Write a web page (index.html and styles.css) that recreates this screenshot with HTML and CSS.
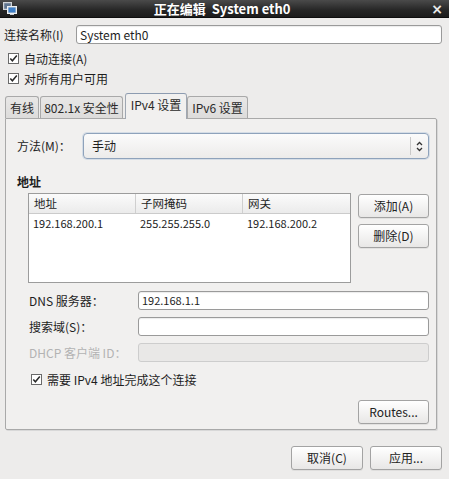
FILE: index.html
```html
<!DOCTYPE html>
<html lang="zh-CN">
<head>
<meta charset="utf-8">
<title>正在编辑 System eth0</title>
<link rel="stylesheet" href="styles.css">
</head>
<body>
<div class="window">
  <div class="titlebar">
    <svg class="app-icon" width="14" height="13" viewBox="0 0 14 13">
      <rect x="0.5" y="0.5" width="8" height="7" fill="#9aa3ad" stroke="#d0d4d8"/>
      <rect x="1.5" y="1.5" width="6" height="5" fill="#5f7590"/>
      <rect x="4.5" y="4.5" width="9" height="7" fill="#c9ced4" stroke="#eef0f2"/>
      <rect x="5.5" y="5.5" width="7" height="5" fill="#3d7fc8"/>
      <rect x="7" y="12" width="4" height="1" fill="#c9ced4"/>
    </svg>
    <div class="title">正在编辑&nbsp; System eth0</div>
    <div class="close">×</div>
  </div>

  <div class="main">
    <div class="name-row">
      <span class="name-label">连接名称(I)</span>
      <div class="entry">System eth0</div>
    </div>

    <div class="check-row top-check">
      <svg class="cb" width="11" height="11" viewBox="0 0 11 11"><rect x="0.5" y="0.5" width="10" height="10" fill="#fff" stroke="#6a6a6a"/><path d="M2.3 5.4 L4.4 7.8 L8.8 2.6" fill="none" stroke="#2a2a2a" stroke-width="1.5"/></svg>
      <span>自动连接(A)</span>
    </div>
    <div class="check-row">
      <svg class="cb" width="11" height="11" viewBox="0 0 11 11"><rect x="0.5" y="0.5" width="10" height="10" fill="#fff" stroke="#6a6a6a"/><path d="M2.3 5.4 L4.4 7.8 L8.8 2.6" fill="none" stroke="#2a2a2a" stroke-width="1.5"/></svg>
      <span>对所有用户可用</span>
    </div>

    <div class="tabs">
      <div class="tab t1">有线</div>
      <div class="tab t2">802.1x 安全性</div>
      <div class="tab t3 active">IPv4 设置</div>
      <div class="tab t4">IPv6 设置</div>
    </div>

    <div class="panel">
      <div class="method-row">
        <span class="method-label">方法(M)：</span>
        <div class="combo">
          <span class="combo-text">手动</span>
          <span class="combo-sep"></span>
          <svg class="combo-arrows" width="7" height="11" viewBox="0 0 7 11">
            <path d="M1 4 L3.5 1.5 L6 4" fill="none" stroke="#333" stroke-width="1.3"/>
            <path d="M1 7 L3.5 9.5 L6 7" fill="none" stroke="#333" stroke-width="1.3"/>
          </svg>
        </div>
      </div>

      <div class="section-title">地址</div>

      <div class="address-area">
        <div class="table">
          <div class="thead">
            <div class="th">地址</div>
            <div class="th">子网掩码</div>
            <div class="th">网关</div>
          </div>
          <div class="trow">
            <div class="td">192.168.200.1</div>
            <div class="td">255.255.255.0</div>
            <div class="td">192.168.200.2</div>
          </div>
        </div>
        <div class="side-buttons">
          <div class="btn">添加(A)</div>
          <div class="btn">删除(D)</div>
        </div>
      </div>

      <div class="form">
        <div class="form-row">
          <span class="form-label">DNS 服务器：</span>
          <div class="entry small-entry"><span class="num">192.168.1.1</span></div>
        </div>
        <div class="form-row">
          <span class="form-label">搜索域(S)：</span>
          <div class="entry small-entry"></div>
        </div>
        <div class="form-row disabled">
          <span class="form-label">DHCP 客户端 ID：</span>
          <div class="entry small-entry"></div>
        </div>
      </div>

      <div class="check-row require">
        <svg class="cb" width="11" height="11" viewBox="0 0 11 11"><rect x="0.5" y="0.5" width="10" height="10" fill="#fff" stroke="#6a6a6a"/><path d="M2.3 5.4 L4.4 7.8 L8.8 2.6" fill="none" stroke="#2a2a2a" stroke-width="1.5"/></svg>
        <span>需要 IPv4 地址完成这个连接</span>
      </div>

      <div class="routes-row">
        <div class="btn">Routes...</div>
      </div>
    </div>

    <div class="dialog-buttons">
      <div class="btn">取消(C)</div>
      <div class="btn">应用...</div>
    </div>
  </div>
</div>
</body>
</html>
```

FILE: styles.css
```css
html, body {
  margin: 0;
  padding: 0;
}
body {
  width: 449px;
  height: 479px;
  overflow: hidden;
  background: #edeceb;
  font-family: "Noto Sans CJK SC", "DejaVu Sans", sans-serif;
  font-size: 12px;
  color: #1e1e1e;
}
.window {
  width: 449px;
  height: 479px;
}
.titlebar {
  height: 18px;
  display: flex;
  align-items: center;
  background: linear-gradient(#4a4a4a, #262626 60%, #1c1c1c);
  border-bottom: 1px solid #0e0e0e;
  box-sizing: border-box;
  padding: 0 6px 0 3px;
}
.app-icon {
  flex: none;
}
.title {
  flex: 1;
  text-align: center;
  color: #ffffff;
  font-weight: bold;
  font-size: 13px;
  line-height: 18px;
  padding-right: 4px;
}
.close {
  color: #e8e8e8;
  font-weight: bold;
  font-size: 14px;
  line-height: 18px;
  font-family: "DejaVu Sans", sans-serif;
}
.main {
  padding: 7px 7px 0 4px;
}
.name-row {
  display: flex;
  height: 19px;
  align-items: center;
}
.name-label {
  width: 72px;
  line-height: 19px;
}
.entry {
  flex: 1;
  height: 19px;
  box-sizing: border-box;
  border: 1px solid #9a9a9a;
  border-radius: 3px;
  background: #ffffff;
  padding-left: 3px;
  line-height: 17px;
  font-size: 12px;
  box-shadow: inset 0 1px 1px rgba(0,0,0,0.08);
}
.check-row {
  display: flex;
  align-items: center;
  height: 20px;
  padding-left: 4px;
}
.top-check {
  margin-top: 4px;
}
.cb {
  flex: none;
  margin-right: 5px;
}
.tabs {
  display: flex;
  align-items: flex-end;
  height: 27px;
  margin-top: 3px;
  padding-left: 1px;
}
.tab {
  height: 22px;
  box-sizing: border-box;
  padding: 0;
  display: flex;
  justify-content: center;
  line-height: 21px;
  border: 1px solid #a9a9a9;
  border-bottom: none;
  border-radius: 3px 3px 0 0;
  background: linear-gradient(#e8e7e6, #dddcdb);
  color: #2a2a2a;
  white-space: nowrap;
}
.t1 { width: 34px; }
.t2 { width: 83px; margin-left: 1px; }
.t3 { width: 62px; margin-left: 2px; }
.t4 { width: 61px; }
.tab.active {
  height: 26px;
  line-height: 22px;
  margin-bottom: -1px;
  position: relative;
  z-index: 1;
  background: #f1f0ef;
  border-color: #9fa7b2;
  border-top-color: #8c9bb0;
}
.panel {
  margin: 0 5px 0 1px;
  border: 1px solid #a9a9a9;
  border-radius: 0 2px 2px 2px;
  background: #f1f0ef;
  padding: 14px 7px 12px 11px;
  height: 312px;
  box-sizing: border-box;
  box-shadow: 1px 1px 0 #d8d8d8;
}
.method-row {
  display: flex;
  align-items: center;
  height: 26px;
}
.method-label {
  width: 66px;
  line-height: 26px;
}
.combo {
  flex: 1;
  height: 26px;
  box-sizing: border-box;
  border: 1px solid #8ea2bb;
  border-radius: 4px;
  background: linear-gradient(#fbfbfb, #ecebea);
  display: flex;
  align-items: center;
  padding-left: 8px;
  padding-right: 5px;
  box-shadow: 0 0 0 1px rgba(160,185,215,0.35);
}
.combo-text {
  flex: 1;
  line-height: 24px;
}
.combo-sep {
  width: 1px;
  height: 18px;
  background: #c9c9c9;
  margin-right: 5px;
}
.combo-arrows {
  flex: none;
}
.section-title {
  font-weight: bold;
  margin-top: 16px;
  line-height: 14px;
  height: 14px;
}
.address-area {
  display: flex;
  margin-top: 4px;
  padding-left: 11px;
  gap: 7px;
}
.table {
  width: 323px;
  height: 90px;
  box-sizing: border-box;
  border: 1px solid #9c9c9c;
  background: #ffffff;
}
.thead {
  display: flex;
  height: 19px;
  background: linear-gradient(#fbfbfb, #ebebeb);
  border-bottom: 1px solid #cbcbcb;
}
.th {
  width: 107px;
  padding-left: 5px;
  box-sizing: border-box;
  line-height: 19px;
  font-size: 11.5px;
  border-right: 1px solid #cfcfcf;
}
.th:last-child {
  border-right: none;
  flex: 1;
}
.trow {
  display: flex;
  height: 18px;
}
.td {
  width: 107px;
  padding-left: 4px;
  box-sizing: border-box;
  line-height: 18px;
  font-size: 11px;
  color: #222;
}
.side-buttons {
  display: flex;
  flex-direction: column;
  gap: 6px;
  padding-top: 1px;
}
.btn {
  height: 24px;
  box-sizing: border-box;
  width: 71px;
  border: 1px solid #a3a3a3;
  border-radius: 3px;
  background: linear-gradient(#ffffff, #e8e7e6);
  text-align: center;
  line-height: 22px;
  color: #222;
  box-shadow: 0 1px 0 rgba(0,0,0,0.06);
}
.form {
  display: flex;
  flex-direction: column;
  gap: 7px;
  margin-top: 8px;
  padding-left: 12px;
}
.form-row {
  display: flex;
  align-items: center;
  height: 19px;
}
.form-label {
  width: 109px;
  line-height: 19px;
}
.small-entry {
  font-size: 11px;
}
.num {
  font-size: 11px;
}
.form-row.disabled .form-label {
  color: #b3b3b3;
}
.form-row.disabled .entry {
  background: #e9e8e7;
  border-color: #cdcdcd;
  box-shadow: none;
}
.check-row.require {
  margin-top: 7px;
  padding-left: 14px;
  height: 20px;
}
.routes-row {
  display: flex;
  justify-content: flex-end;
  margin-top: 11px;
}
.dialog-buttons {
  display: flex;
  justify-content: flex-end;
  gap: 7px;
  margin-top: 16px;
  padding-right: 0;
}
.dialog-buttons .btn {
  width: 72px;
}
```
